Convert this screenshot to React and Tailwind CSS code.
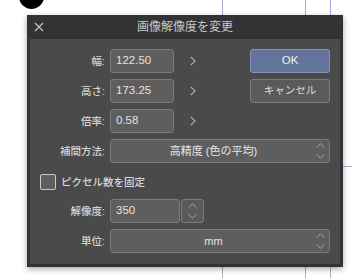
import React from 'react';

const font = { fontFamily: '"Liberation Sans", "Noto Sans CJK JP", sans-serif' };

const Chevron = () => (
  <svg width="6" height="10" viewBox="0 0 6 10" className="shrink-0">
    <polyline points="0.8,0.8 5,5 0.8,9.2" fill="none" stroke="#b4b4b4" strokeWidth="1.1" />
  </svg>
);

const UpDown = () => (
  <svg width="9" height="16" viewBox="0 0 9 16" className="shrink-0">
    <polyline points="0.6,4.6 4.5,0.8 8.4,4.6" fill="none" stroke="#aaaaaa" strokeWidth="1" />
    <polyline points="0.6,11.4 4.5,15.2 8.4,11.4" fill="none" stroke="#aaaaaa" strokeWidth="1" />
  </svg>
);

const Label = ({ children }) => (
  <div className="w-[75px] text-right text-[10.5px] font-medium text-[#d4d4d4] leading-none">{children}</div>
);

const Field = ({ value, width }) => (
  <div
    className="h-[24px] ml-[5px] flex items-center pl-[5px] bg-[#5e5e5e] border border-[#7b7b7b] rounded-[3px] text-[11.5px] text-[#e2e2e2]"
    style={{ width }}
  >
    {value}
  </div>
);

const Select = ({ value }) => (
  <div className="h-[24px] w-[220px] ml-[5px] flex items-center bg-[#5e5e5e] border border-[#7b7b7b] rounded-[3px] pr-[4px]">
    <div className="flex-1 text-center text-[11px] text-[#e6e6e6]">{value}</div>
    <UpDown />
  </div>
);

export default function App() {
  return (
    <div className="relative w-[352px] h-[278px] bg-white overflow-hidden" style={font}>
      {/* canvas behind the dialog */}
      <div className="absolute left-[19px] top-[-16px] w-[25px] h-[25px] rounded-full bg-black" />
      <div className="absolute left-[222px] top-0 w-px h-full bg-[#a9a9d6]" />
      <div className="absolute left-[305px] top-0 w-px h-full bg-[#a9a9d6]" />
      <div className="absolute left-[330px] top-0 w-px h-full bg-[#a9a9d6]" />
      <div className="absolute left-[330px] top-[166px] w-[22px] h-px bg-[#a9a9d6]" />

      <div className="relative ml-[27px] mt-[15px] w-[316px] bg-[#333333] px-[3px] pb-[3px] shadow-[0_2px_6px_rgba(0,0,0,0.35)]">
        <div className="h-[24px] grid grid-cols-[1fr_auto_1fr] items-center">
          <svg width="10" height="10" viewBox="0 0 10 10" className="ml-[4px]">
            <path d="M1 1 L9 9 M9 1 L1 9" stroke="#c4c4c4" strokeWidth="1.2" />
          </svg>
          <div className="text-[12px] text-[#c6c6c6] leading-none">画像解像度を変更</div>
          <div />
        </div>

        <div className="h-[225px] bg-[#4a4a4a] pt-[10px] pr-[10px] flex flex-col">
          <div className="flex items-center h-[24px]">
            <Label>幅:</Label>
            <Field value="122.50" width={64} />
            <div className="ml-[16px]"><Chevron /></div>
            <button className="ml-auto w-[80px] h-[24px] rounded-[3px] bg-[#63739b] border border-[#8793b3] text-[11.5px] font-medium text-[#eef0f6]">
              OK
            </button>
          </div>

          <div className="flex items-center h-[24px] mt-[6px]">
            <Label>高さ:</Label>
            <Field value="173.25" width={64} />
            <div className="ml-[16px]"><Chevron /></div>
            <button className="ml-auto w-[80px] h-[24px] rounded-[3px] bg-[#5a5a5a] border border-[#7b7b7b] text-[10.5px] text-[#dcdcdc]">
              キャンセル
            </button>
          </div>

          <div className="flex items-center h-[24px] mt-[6px]">
            <Label>倍率:</Label>
            <Field value="0.58" width={64} />
            <div className="ml-[16px]"><Chevron /></div>
          </div>

          <div className="flex items-center h-[24px] mt-[6px]">
            <Label>補間方法:</Label>
            <Select value="高精度 (色の平均)" />
          </div>

          <div className="flex items-center h-[16px] mt-[11px] pl-[10px]">
            <div className="w-[16px] h-[16px] rounded-[2px] bg-[#5e5e5e] border border-[#c8c8c8]" />
            <span className="ml-[5px] text-[10.5px] font-medium text-[#d8d8d8] leading-none">ピクセル数を固定</span>
          </div>

          <div className="flex items-center h-[24px] mt-[9px]">
            <Label>解像度:</Label>
            <Field value="350" width={70} />
            <div className="ml-px w-[23px] h-[24px] flex items-center justify-center bg-[#5a5a5a] border border-[#7b7b7b] rounded-[3px]">
              <UpDown />
            </div>
          </div>

          <div className="flex items-center h-[24px] mt-[6px]">
            <Label>単位:</Label>
            <Select value="mm" />
          </div>
        </div>
      </div>
    </div>
  );
}
